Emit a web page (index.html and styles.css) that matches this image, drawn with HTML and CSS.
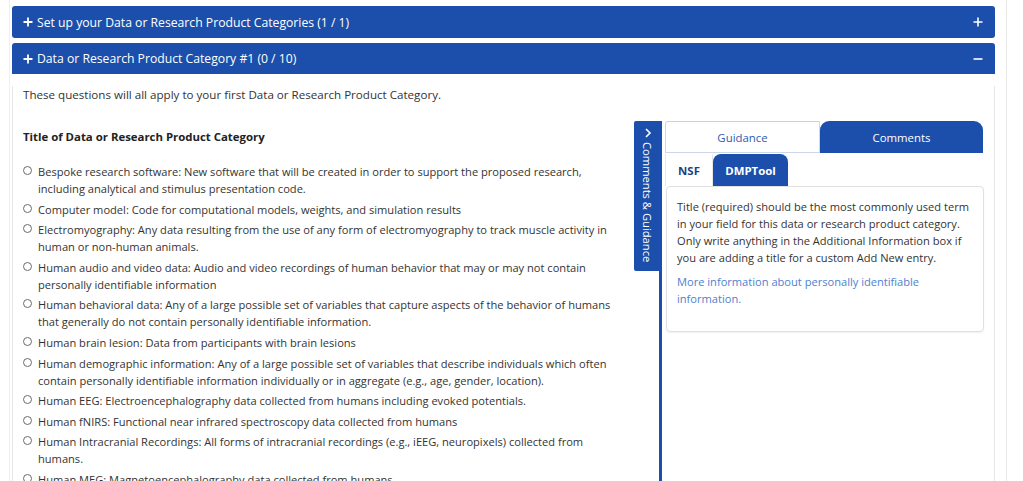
FILE: index.html
```html
<!DOCTYPE html>
<html lang="en">
<head>
<meta charset="utf-8">
<title>Data or Research Product Category</title>
<link rel="stylesheet" href="styles.css">
</head>
<body>
<div class="frame">
  <div class="acc-head acc-closed">
    <span class="acc-title"><svg class="ico" viewBox="0 0 10 10" width="10" height="10"><path d="M5 0.5V9.5M0.5 5H9.5" stroke="#fff" stroke-width="1.8" fill="none"/></svg>Set up your Data or Research Product Categories (1 / 1)</span>
    <svg class="ico" viewBox="0 0 10 10" width="10" height="10"><path d="M5 0.5V9.5M0.5 5H9.5" stroke="#fff" stroke-width="1.6" fill="none"/></svg>
  </div>
  <div class="acc-head acc-open">
    <span class="acc-title"><svg class="ico" viewBox="0 0 10 10" width="10" height="10"><path d="M5 0.5V9.5M0.5 5H9.5" stroke="#fff" stroke-width="1.8" fill="none"/></svg>Data or Research Product Category #1 (0 / 10)</span>
    <svg class="ico" viewBox="0 0 10 10" width="10" height="10"><path d="M0.5 5H9.5" stroke="#fff" stroke-width="1.6" fill="none"/></svg>
  </div>
  <div class="acc-body">
    <p class="intro">These questions will all apply to your first Data or Research Product Category.</p>
    <div class="row">
      <div class="qcol">
        <div class="qtitle">Title of Data or Research Product Category</div>
        <ul class="radios">
          <li><span class="radio"></span><span class="lbl">Bespoke research software: New software that will be created in order to support the proposed research, including analytical and stimulus presentation code.</span></li>
          <li><span class="radio"></span><span class="lbl">Computer model: Code for computational models, weights, and simulation results</span></li>
          <li><span class="radio"></span><span class="lbl">Electromyography: Any data resulting from the use of any form of electromyography to track muscle activity in human or non-human animals.</span></li>
          <li><span class="radio"></span><span class="lbl">Human audio and video data: Audio and video recordings of human behavior that may or may not contain personally identifiable information</span></li>
          <li><span class="radio"></span><span class="lbl">Human behavioral data: Any of a large possible set of variables that capture aspects of the behavior of humans that generally do not contain personally identifiable information.</span></li>
          <li><span class="radio"></span><span class="lbl">Human brain lesion: Data from participants with brain lesions</span></li>
          <li><span class="radio"></span><span class="lbl">Human demographic information: Any of a large possible set of variables that describe individuals which often contain personally identifiable information individually or in aggregate (e.g., age, gender, location).</span></li>
          <li><span class="radio"></span><span class="lbl">Human EEG: Electroencephalography data collected from humans including evoked potentials.</span></li>
          <li><span class="radio"></span><span class="lbl">Human fNIRS: Functional near infrared spectroscopy data collected from humans</span></li>
          <li><span class="radio"></span><span class="lbl">Human Intracranial Recordings: All forms of intracranial recordings (e.g., iEEG, neuropixels) collected from humans.</span></li>
          <li><span class="radio"></span><span class="lbl">Human MEG: Magnetoencephalography data collected from humans</span></li>
        </ul>
      </div>
      <div class="side">
        <div class="vtab">
          <svg class="chev" viewBox="0 0 10 10" width="10" height="10"><path d="M3 1L7 5L3 9" stroke="#fff" stroke-width="1.6" fill="none"/></svg>
          <span class="vtext">Comments &amp; Guidance</span>
        </div>
        <div class="gpanel">
          <div class="tabs">
            <div class="tab tab-guidance">Guidance</div>
            <div class="tab tab-comments">Comments</div>
          </div>
          <div class="subtabs">
            <div class="subtab sub-nsf">NSF</div>
            <div class="subtab sub-dmp">DMPTool</div>
          </div>
          <div class="gbox">
            <p>Title (required) should be the most commonly used term in your field for this data or research product category. Only write anything in the Additional Information box if you are adding a title for a custom Add New entry.</p>
            <p><a href="#" class="glink">More information about personally identifiable information.</a></p>
          </div>
        </div>
      </div>
    </div>
  </div>
</div>
</body>
</html>
```

FILE: styles.css
```css
html, body {
  margin: 0;
  padding: 0;
  background: #ffffff;
}
body {
  font-family: "Open Sans", "Noto Sans", sans-serif;
  color: #333333;
  overflow: hidden;
  height: 481px;
}
.frame {
  margin-left: 9px;
  width: 983px;
  height: 481px;
  border-left: 1px solid #efefef;
  border-right: 1px solid #e9e9e9;
  padding: 6px 11px 0 2px;
  box-sizing: content-box;
  overflow: hidden;
}
.acc-head {
  display: flex;
  align-items: center;
  justify-content: space-between;
  background: #1c4fab;
  color: #ffffff;
  font-size: 12.2px;
  padding: 0 12px 0 11px;
  border-radius: 3px;
}
.acc-closed {
  height: 32px;
  margin-bottom: 5px;
}
.acc-open {
  height: 31px;
  border-radius: 3px 3px 0 0;
}
.acc-title {
  display: flex;
  align-items: center;
  gap: 4px;
}
.ico {
  display: block;
}
.acc-body {
  border: 1px solid #e7e7e7;
  border-top: none;
  padding: 0 10px 0 10px;
  height: 420px;
}
.intro {
  margin: 12px 0 17px;
  font-size: 11.6px;
  line-height: 18px;
}
.row {
  display: flex;
}
.qcol {
  flex: 0 0 611px;
}
.qtitle {
  padding-top: 7px;
  font-weight: 700;
  font-size: 11.4px;
  line-height: 18px;
  color: #222222;
  margin-bottom: 17px;
}
.radios {
  list-style: none;
  margin: 0;
  padding: 0 20px 0 0;
}
.radios li {
  display: flex;
  align-items: flex-start;
  margin-bottom: 3.6px;
  font-size: 11.1px;
  line-height: 17px;
}
.radio {
  flex: 0 0 auto;
  width: 7px;
  height: 7px;
  border: 1px solid #6b6b6b;
  border-radius: 50%;
  margin: 3px 6px 0 0;
}
.lbl {
  flex: 1;
}
.side {
  flex: 1;
  display: flex;
  align-items: flex-start;
  height: 400px;
}
.vtab {
  flex: 0 0 25px;
  height: 150px;
  background: #1c4fab;
  border-radius: 2px 0 0 2px;
  display: flex;
  flex-direction: column;
  align-items: center;
  padding-top: 7px;
  box-sizing: border-box;
  color: #ffffff;
}
.chev {
  display: block;
  margin-left: 2px;
}
.vtext {
  writing-mode: vertical-rl;
  font-size: 11.2px;
  margin-top: 4px;
  margin-left: 1px;
  line-height: 14px;
}
.gpanel {
  flex: 1;
  align-self: stretch;
  border-left: 3px solid #1c4fab;
  padding-left: 3px;
}
.tabs {
  display: flex;
  height: 32px;
}
.tab {
  display: flex;
  align-items: center;
  justify-content: center;
  font-size: 11.4px;
  box-sizing: border-box;
}
.tab-guidance {
  width: 155px;
  color: #2c5cb4;
  border: 1px solid #cdd7ea;
  border-top-color: #c3d2ef;
  border-radius: 3px 0 0 0;
}
.tab-comments {
  width: 163px;
  background: #1c4fab;
  color: #ffffff;
  border-radius: 9px 9px 0 0;
}
.subtabs {
  display: flex;
  height: 32px;
  margin-top: 1px;
}
.subtab {
  display: flex;
  align-items: center;
  justify-content: center;
  font-weight: 700;
  font-size: 11.4px;
  box-sizing: border-box;
}
.sub-nsf {
  width: 48px;
  color: #1d3f86;
  border-left: 1px solid #e8e8e8;
  border-right: 1px solid #e8e8e8;
}
.sub-dmp {
  width: 75px;
  background: #1c4fab;
  color: #ffffff;
  border-radius: 8px 8px 0 0;
}
.gbox {
  margin-left: 1px;
  width: 318px;
  box-sizing: border-box;
  border: 1px solid #e0e0e0;
  border-radius: 4px;
  box-shadow: 0 1px 2px rgba(0, 0, 0, 0.06);
  padding: 11px 8px 24px 10px;
  font-size: 11.1px;
  line-height: 17px;
}
.gbox p {
  margin: 0 0 7px;
}
.gbox p:last-child {
  margin-bottom: 0;
}
.glink {
  color: #4d7fcf;
  text-decoration: none;
}
```
